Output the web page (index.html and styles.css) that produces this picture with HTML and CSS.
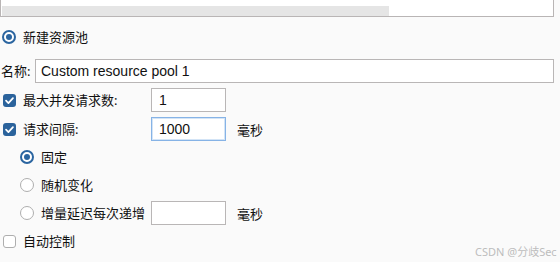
FILE: index.html
```html
<!DOCTYPE html>
<html lang="zh-CN">
<head>
    <meta charset="UTF-8">
    <title>资源池</title>
    <link rel="stylesheet" href="styles.css">
</head>
<body>
<div class="topbox">
    <div class="scrollbar"></div>
</div>

<div class="row pick">
    <span class="radio on"></span>
    <span class="text">新建资源池</span>
</div>

<div class="row name">
    <span class="text">名称:</span>
    <div class="field wide">Custom resource pool 1</div>
</div>

<div class="row">
    <div class="lead">
        <span class="check on">
            <svg viewBox="0 0 12 12"><path d="M2.8,6.2l2.2,2.2l4.2-4.6"></path></svg>
        </span>
        <span class="text">最大并发请求数:</span>
    </div>
    <div class="field">1</div>
</div>

<div class="row">
    <div class="lead">
        <span class="check on">
            <svg viewBox="0 0 12 12"><path d="M2.8,6.2l2.2,2.2l4.2-4.6"></path></svg>
        </span>
        <span class="text">请求间隔:</span>
    </div>
    <div class="field focus">1000</div>
    <span class="unit">毫秒</span>
</div>

<div class="sub">
    <div class="row">
        <span class="radio on"></span>
        <span class="text">固定</span>
    </div>
    <div class="row">
        <span class="radio"></span>
        <span class="text">随机变化</span>
    </div>
    <div class="row">
        <div class="lead">
            <span class="radio"></span>
            <span class="text">增量延迟每次递增</span>
        </div>
        <div class="field"></div>
        <span class="unit">毫秒</span>
    </div>
    <div class="row auto">
        <span class="check"></span>
        <span class="text">自动控制</span>
    </div>
</div>

<div class="mark">CSDN @分歧Sec</div>
</body>
</html>
```

FILE: styles.css
```css
body{
    margin: 0;
    background-color: #fafafa;
    font-family: "Noto Sans", "Noto Sans CJK SC", sans-serif;
    font-size: 13px;
    color: #111;
    width: 560px;
    height: 262px;
    overflow: hidden;
    position: relative;
}
.topbox{
    box-sizing: border-box;
    width: 554px;
    height: 17px;
    padding-top: 6px;
    padding-left: 1px;
    background-color: #fff;
    border: 1px solid #b9b5b5;
    border-top: 0;
}
.scrollbar{
    width: 387px;
    height: 10px;
    background-color: #e5e5e5;
}
.row{
    display: flex;
    align-items: center;
    height: 24px;
    margin-top: 5px;
}
.row.pick{
    margin-top: 8px;
    padding-left: 2px;
}
.row.name{
    margin-top: 10px;
    padding-left: 1px;
}
.row.name .text{
    width: 34px;
}
.lead{
    display: flex;
    align-items: center;
    width: 148px;
    padding-left: 3px;
}
.text{
    line-height: 24px;
    white-space: nowrap;
}
.radio{
    box-sizing: border-box;
    width: 14px;
    height: 14px;
    border-radius: 50%;
    border: 1px solid #aeaeae;
    background-color: #fff;
    margin-right: 7px;
    flex: none;
    position: relative;
}
.radio.on{
    border: 2px solid #2b65a0;
}
.radio.on::after{
    content: "";
    position: absolute;
    left: 2px;
    top: 2px;
    width: 6px;
    height: 6px;
    border-radius: 50%;
    background-color: #2b65a0;
}
.check{
    box-sizing: border-box;
    width: 13px;
    height: 13px;
    border-radius: 3px;
    border: 1px solid #aeaeae;
    background-color: #fff;
    margin-right: 7px;
    flex: none;
    display: flex;
}
.check.on{
    border: 0;
    background-color: #2b639c;
}
.check svg{
    width: 13px;
    height: 13px;
    fill: none;
    stroke: #fff;
    stroke-width: 1.6;
    stroke-linecap: round;
    stroke-linejoin: round;
}
.field{
    box-sizing: border-box;
    width: 75px;
    height: 24px;
    border: 1px solid #b9b6b6;
    background-color: #fff;
    padding-left: 7px;
    line-height: 22px;
    font-family: "Liberation Sans", sans-serif;
    font-size: 14px;
}
.field.wide{
    width: 519px;
    padding-left: 5px;
}
.field.focus{
    border-color: #86b3e6;
    box-shadow: inset 0 0 0 1px #d3e4f6;
}
.unit{
    margin-left: 11px;
}
.sub .row{
    margin-top: 4px;
    padding-left: 20px;
}
.sub .row .lead{
    padding-left: 0;
    width: 131px;
}
.sub .row.auto{
    padding-left: 3px;
}
.mark{
    position: absolute;
    left: 475px;
    top: 243px;
    font-size: 11px;
    color: #bdbdbd;
    white-space: nowrap;
}
```
